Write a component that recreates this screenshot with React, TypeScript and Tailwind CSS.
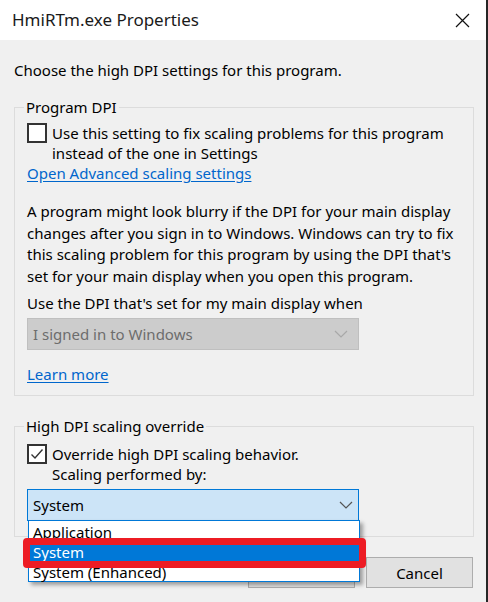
import React from 'react';

const font = { fontFamily: '"Noto Sans", "Liberation Sans", sans-serif' };

const Chevron: React.FC<{ color: string }> = ({ color }) => (
  <svg width="14" height="8" viewBox="0 0 14 8" fill="none">
    <path d="M1 1l6 6 6-6" stroke={color} strokeWidth="1.2" />
  </svg>
);

const CheckBox: React.FC<{ checked?: boolean }> = ({ checked }) => (
  <div className="w-[20px] h-[20px] shrink-0 border-2 border-[#333333] bg-white flex items-center justify-center">
    {checked && (
      <svg width="14" height="12" viewBox="0 0 14 12" fill="none">
        <path d="M1.5 6.5l3.5 3.5 7.5-8.5" stroke="#333333" strokeWidth="1.4" />
      </svg>
    )}
  </div>
);

const GroupBox: React.FC<{ title: string; className?: string; children: React.ReactNode }> = ({
  title,
  className,
  children,
}) => (
  <fieldset className={`border border-[#dcdcdc] px-[12px] ${className ?? ''}`}>
    <legend className="ml-[-3px] px-[2px] leading-[20px]">{title}</legend>
    {children}
  </fieldset>
);

export default function App() {
  return (
    <div
      className="relative w-[488px] h-[602px] overflow-hidden bg-[#f0f0f0] text-[15px] leading-[20px] text-black border-r-2 border-[#262626]"
      style={font}
    >
      {/* Title bar */}
      <div className="h-[40px] bg-white flex items-center justify-between pl-[12px] pr-[16px]">
        <span className="text-[17px] text-[#1a1a1a]">HmiRTm.exe Properties</span>
        <svg width="15" height="15" viewBox="0 0 15 15" fill="none">
          <path d="M1 1l13 13M14 1L1 14" stroke="#111111" strokeWidth="1.2" />
        </svg>
      </div>

      <div className="pl-[14px] pr-[12px] pt-[20px] flex flex-col">
        <p>Choose the high DPI settings for this program.</p>

        <GroupBox title="Program DPI" className="mt-[17px] pb-[11px]">
          <div className="flex gap-[5px] mt-[6px]">
            <CheckBox />
            <p className="whitespace-nowrap">
              Use this setting to fix scaling problems for this program
              <br />
              instead of the one in Settings
            </p>
          </div>
          <a className="block text-[#0066cc] underline underline-offset-2">Open Advanced scaling settings</a>
          <p className="mt-[18px] leading-[21.6px] whitespace-nowrap">
            A program might look blurry if the DPI for your main display
            <br />
            changes after you sign in to Windows. Windows can try to fix
            <br />
            this scaling problem for this program by using the DPI that's
            <br />
            set for your main display when you open this program.
          </p>
          <p className="mt-[6px]">Use the DPI that's set for my main display when</p>
          <div className="mt-[5px] w-[332px] h-[32px] bg-[#cccccc] border border-[#bfbfbf] flex items-center justify-between pl-[5px] pr-[10px] text-[#6d6d6d]">
            <span>I signed in to Windows</span>
            <Chevron color="#a8a8a8" />
          </div>
          <a className="block mt-[14px] text-[#0066cc] underline underline-offset-2">Learn more</a>
        </GroupBox>

        <GroupBox title="High DPI scaling override" className="mt-[20px] pb-[15px]">
          <div className="flex gap-[5px] mt-[8px]">
            <CheckBox checked />
            <p>
              Override high DPI scaling behavior.
              <br />
              Scaling performed by:
            </p>
          </div>
          <div className="mt-[5px] w-[332px] h-[32px] bg-[#cce4f7] border border-[#0078d7] flex items-center justify-between pl-[5px] pr-[5px]">
            <span>System</span>
            <Chevron color="#555555" />
          </div>
        </GroupBox>

        <div className="mt-[20px] flex justify-end gap-[11px] pr-[1px]">
          <button className="w-[107px] h-[31px] bg-[#e1e1e1] border border-[#adadad]">OK</button>
          <button className="w-[107px] h-[31px] bg-[#e1e1e1] border border-[#adadad]">Cancel</button>
        </div>
      </div>

      {/* Open dropdown list */}
      <div className="absolute left-[28px] top-[520px] w-[332px] h-[62px] bg-white border border-[#0078d7] shadow-[3px_3px_4px_rgba(0,0,0,0.35)] pt-[1px]">
        <div className="h-[20px] pl-[4px]">Application</div>
        <div className="h-[20px] pl-[4px] bg-[#0078d7] text-white">System</div>
        <div className="h-[20px] pl-[4px]">System (Enhanced)</div>
      </div>

      {/* Red highlight annotation */}
      <div className="absolute left-[23px] top-[538px] w-[343px] h-[30px] border-[7px] border-[#ed1c24] rounded-[4px]" />
    </div>
  );
}
